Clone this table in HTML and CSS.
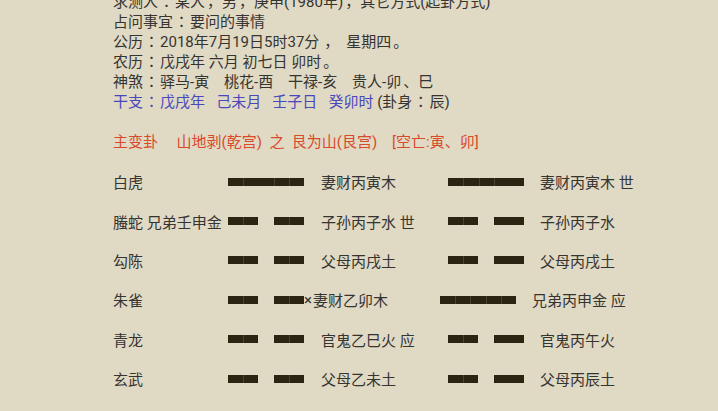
FILE: index.html
```html
<!DOCTYPE html>
<html lang="zh">
<head>
<meta charset="utf-8">
<link rel="stylesheet" href="styles.css">
</head>
<body>
<div class="page">
  <div class="info">
    <p class="line">求测人<span class="fc">：</span>某人<span class="fp">，</span>男<span class="fp">，</span>庚申(1980年)<span class="fp">，</span>其它方式(起卦方式)</p>
    <p class="line">占问事宜<span class="fc">：</span>要问的事情</p>
    <p class="line">公历<span class="fc">：</span>2018年7月19日5时37分<span class="fp fp-wide">，</span>星期四<span class="fp">。</span></p>
    <p class="line">农历<span class="fc">：</span>戊戌年 六月 初七日 卯时<span class="fp">。</span></p>
    <p class="line">神煞<span class="fc">：</span>驿马-寅&nbsp;&nbsp;&nbsp;&nbsp;桃花-酉&nbsp;&nbsp;&nbsp;&nbsp;干禄-亥&nbsp;&nbsp;&nbsp;&nbsp;贵人-卯<span class="fp">、</span>巳</p>
    <p class="line"><span class="blue">干支<span class="fc">：</span>戊戌年&nbsp;&nbsp;&nbsp;己未月&nbsp;&nbsp;&nbsp;壬子日&nbsp;&nbsp;&nbsp;癸卯时</span> (卦身<span class="fc">：</span>辰)</p>
  </div>
  <p class="title">主变卦&nbsp;&nbsp;&nbsp;&nbsp;&nbsp;山地剥(乾宫)&nbsp;&nbsp;之&nbsp;&nbsp;艮为山(艮宫)&nbsp;&nbsp;&nbsp;&nbsp;[空亡:寅<span class="fp">、</span>卯]</p>
  <div class="gua">
    <div class="row">
      <span class="god">白虎</span>
      <span class="bar"><i class="w15"></i><i class="w31"></i><i class="w15"></i><i class="w15"></i></span>
      <span class="mark"></span>
      <span class="yao">妻财丙寅木</span>
      <span class="bar"><i class="w15"></i><i class="w16"></i><i class="w16"></i><i class="w30"></i></span>
      <span class="yao2">妻财丙寅木 世</span>
    </div>
    <div class="row">
      <span class="god">螣蛇 兄弟壬申金</span>
      <span class="bar yin"><span class="half"><i class="w15"></i><i class="w15"></i></span><span class="half"><i class="w15"></i><i class="w15"></i></span></span>
      <span class="mark"></span>
      <span class="yao">子孙丙子水 世</span>
      <span class="bar yin"><span class="half"><i class="w15"></i><i class="w15"></i></span><span class="half"><i class="w30"></i></span></span>
      <span class="yao2">子孙丙子水</span>
    </div>
    <div class="row">
      <span class="god">勾陈</span>
      <span class="bar yin"><span class="half"><i class="w15"></i><i class="w15"></i></span><span class="half"><i class="w15"></i><i class="w15"></i></span></span>
      <span class="mark"></span>
      <span class="yao">父母丙戌土</span>
      <span class="bar yin"><span class="half"><i class="w15"></i><i class="w15"></i></span><span class="half"><i class="w30"></i></span></span>
      <span class="yao2">父母丙戌土</span>
    </div>
    <div class="row">
      <span class="god">朱雀</span>
      <span class="bar yin"><span class="half"><i class="w15"></i><i class="w15"></i></span><span class="half"><i class="w15"></i><i class="w15"></i></span></span>
      <span class="mark mark-x">×</span>
      <span class="yao">妻财乙卯木</span>
      <span class="bar"><i class="w15"></i><i class="w15"></i><i class="w16"></i><i class="w15"></i><i class="w15"></i></span>
      <span class="yao2">兄弟丙申金 应</span>
    </div>
    <div class="row">
      <span class="god">青龙</span>
      <span class="bar yin"><span class="half"><i class="w15"></i><i class="w15"></i></span><span class="half"><i class="w15"></i><i class="w15"></i></span></span>
      <span class="mark"></span>
      <span class="yao">官鬼乙巳火 应</span>
      <span class="bar yin"><span class="half"><i class="w15"></i><i class="w15"></i></span><span class="half"><i class="w30"></i></span></span>
      <span class="yao2">官鬼丙午火</span>
    </div>
    <div class="row">
      <span class="god">玄武</span>
      <span class="bar yin"><span class="half"><i class="w15"></i><i class="w15"></i></span><span class="half"><i class="w15"></i><i class="w15"></i></span></span>
      <span class="mark"></span>
      <span class="yao">父母乙未土</span>
      <span class="bar yin"><span class="half"><i class="w15"></i><i class="w15"></i></span><span class="half"><i class="w30"></i></span></span>
      <span class="yao2">父母丙辰土</span>
    </div>
  </div>
</div>
</body>
</html>
```

FILE: styles.css
```css
html, body {
  margin: 0;
  padding: 0;
  background: #e0d9c4;
}
body {
  font-family: Roboto, "Noto Sans CJK JP", sans-serif;
  font-size: 15px;
  color: #363431;
  overflow: hidden;
  height: 411px;
}
.page {
  padding-left: 113px;
  margin-top: -8px;
}
.info {
  display: flex;
  flex-direction: column;
}
.line {
  margin: 0;
  line-height: 20px;
  white-space: nowrap;
}
.fc,
.fp {
  display: inline-block;
  width: 17px;
}
.fc {
  text-align: center;
}
.fp {
  text-align: left;
  padding-left: 2px;
  box-sizing: border-box;
}
.fp-wide {
  width: 27px;
  padding-left: 5px;
}
.blue {
  color: #4848bc;
}
.title {
  margin: 20px 0 0;
  line-height: 20px;
  color: #d9492c;
  white-space: nowrap;
}
.title .fp {
  width: 15px;
  padding-left: 0;
}
.gua {
  display: flex;
  flex-direction: column;
  padding-top: 10px;
}
.row {
  display: flex;
  align-items: center;
  height: 39.4px;
  white-space: nowrap;
}
.god {
  width: 115px;
  flex: none;
}
.bar {
  display: flex;
  width: 76px;
  height: 8px;
  flex: none;
}
.bar.yin {
  justify-content: space-between;
}
.half {
  display: flex;
  width: 30px;
  height: 8px;
}
.bar i {
  display: block;
  height: 8px;
  background: #2b2413;
}
.bar i + i {
  box-shadow: inset 1px 0 0 #4a4330;
}
.w15 { width: 15px; }
.w16 { width: 16px; }
.w30 { width: 30px; }
.w31 { width: 31px; }
.mark {
  width: 17px;
  flex: none;
}
.mark-x {
  width: 9px;
}
.yao {
  width: 127px;
  flex: none;
}
.yao2 {
  margin-left: 16px;
}
```
